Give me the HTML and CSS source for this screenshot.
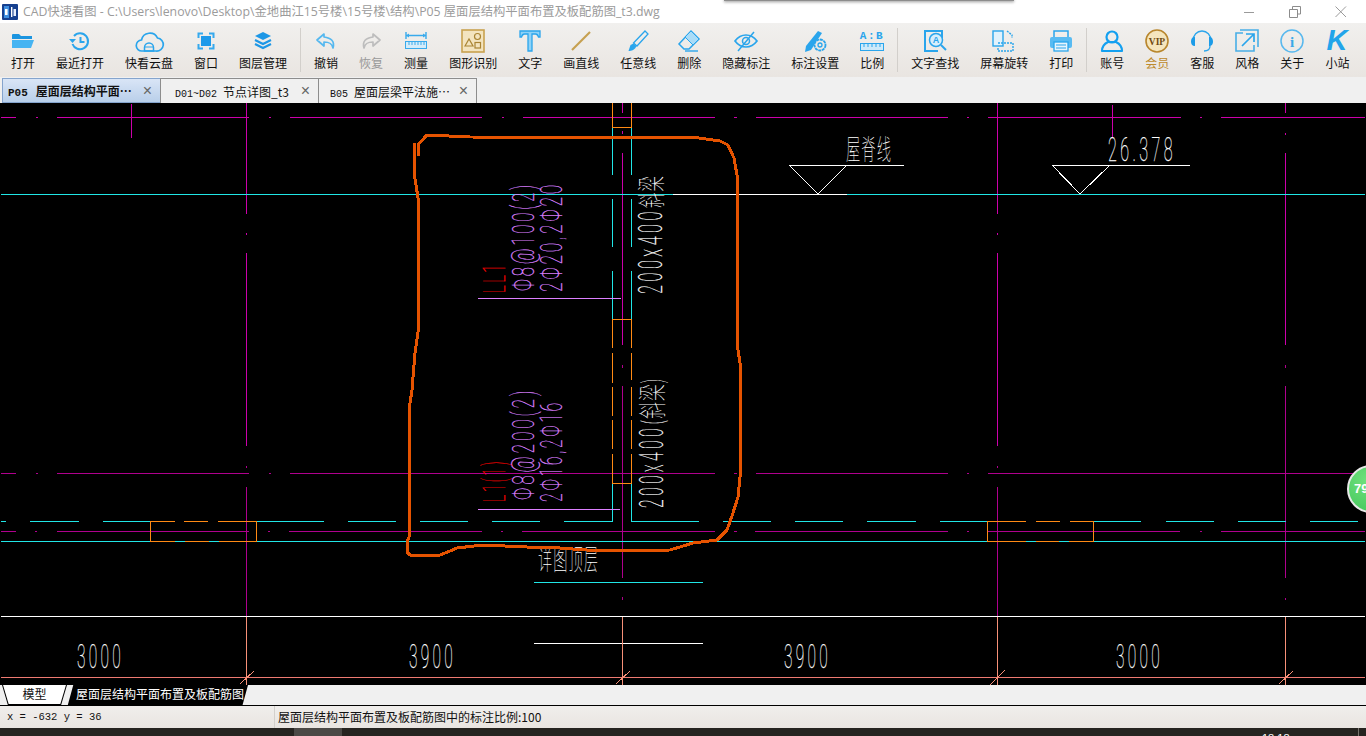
FILE: index.html
```html
<!DOCTYPE html>
<html lang="zh">
<head>
<meta charset="utf-8">
<title>CAD快速看图</title>
<link rel="stylesheet" href="styles.css">
</head>
<body>
<div class="app">
  <div class="ghost-shadow"></div>
  <header class="titlebar">
    <svg class="app-logo" viewBox="0 0 16 16"><rect width="16" height="16" rx="1" fill="#16408f"/><rect x="2" y="2" width="5" height="12" fill="#3f8fe0"/><rect x="9" y="3" width="1.4" height="10" fill="#fff"/><rect x="3" y="5" width="2.6" height="6" fill="#fff"/><rect x="11.5" y="5" width="2.5" height="7" fill="#e6eefc"/></svg>
    <span class="title-text">CAD快速看图 - C:\Users\lenovo\Desktop\金地曲江15号楼\15号楼\结构\P05 屋面层结构平面布置及板配筋图_t3.dwg</span>
    <div class="winctl">
      <svg viewBox="0 0 12 12"><path d="M1 6.5H11" stroke="#9a9a9a" fill="none"/></svg>
      <svg viewBox="0 0 12 12"><path d="M3.5 3V.5H11.500V8H9M.5 3.500H8.500V11.500H.5Z" stroke="#8c8c8c" fill="none"/></svg>
      <svg viewBox="0 0 12 12"><path d="M.5.5L11 11M11 .5L.5 11" stroke="#9a9a9a" fill="none"/></svg>
    </div>
  </header>

  <nav class="toolbar">
    <div class="tool"><svg class="ico" viewBox="0 0 24 24"><path d="M1 6a1 1 0 0 1 1-1h6l2 2h11v3H1z" fill="#1c95e0"/><path d="M1 11h22l-3 8H1z" fill="#46b4f2"/></svg><span>打开</span></div>
    <div class="tool"><svg class="ico" viewBox="0 0 24 24"><g fill="none" stroke="#2aa5ec" stroke-width="2"><path d="M6 7a8 8 0 1 1-1.500 8"/><path d="M12.500 8v5h4"/></g><path d="M1 10h7l-3.500 4z" fill="#2aa5ec"/></svg><span>最近打开</span></div>
    <div class="tool"><svg class="ico" viewBox="0 0 24 24"><path d="M5 22a5.500 5.500 0 0 1-.5-11 8.500 8.500 0 0 1 16-2 6.500 6.500 0 0 1-1.500 13z" fill="none" stroke="#2aa5ec" stroke-width="1.700"/><path d="M7.500 22v-3.500a4.500 4.500 0 0 1 9 0V22z" fill="none" stroke="#2aa5ec" stroke-width="1.500"/><path d="M8 18h8" stroke="#2aa5ec"/></svg><span>快看云盘</span></div>
    <div class="tool"><svg class="ico" viewBox="0 0 24 24"><rect x="7" y="7" width="10" height="10" fill="#1d9aea"/><path d="M4.500 9V4.500H9M15 4.500h4.500V9M19.500 15v4.500H15M9 19.500H4.500V15" fill="none" stroke="#35a9ee" stroke-width="2"/></svg><span>窗口</span></div>
    <div class="tool"><svg class="ico" viewBox="0 0 24 24"><path d="M12 3l8 4-8 4-8-4z" fill="#1d97e6"/><path d="M4 11l8 4 8-4M4 15l8 4 8-4" fill="none" stroke="#1d97e6" stroke-width="2.200"/></svg><span>图层管理</span></div>
    <div class="sep"></div>
    <div class="tool"><svg class="ico" viewBox="0 0 24 24"><path d="M10 5L3 11l7 6v-4c5 0 8 1 9 6 2-7-2-10-9-11z" fill="none" stroke="#55b8ef" stroke-width="1.700" stroke-linejoin="round"/></svg><span>撤销</span></div>
    <div class="tool off"><svg class="ico" viewBox="0 0 24 24"><path d="M14 5l7 6-7 6v-4c-5 0-8 1-9 6-2-7 2-10 9-11z" fill="none" stroke="#bdbdbd" stroke-width="1.700" stroke-linejoin="round"/></svg><span>恢复</span></div>
    <div class="tool"><svg class="ico" viewBox="0 0 24 24"><path d="M2 3v7M22 3v7M2 6.500h20" fill="none" stroke="#38aaec" stroke-width="1.400"/><path d="M2 6.500l3-2v4zM22 6.500l-3-2v4z" fill="#38aaec"/><rect x="1.500" y="12.500" width="21" height="7" fill="#d4ecfa" stroke="#38aaec"/><path d="M5 13v3M8 13v3M11 13v3M14 13v3M17 13v3M20 13v3" stroke="#38aaec"/></svg><span>测量</span></div>
    <div class="tool"><svg class="ico" viewBox="0 0 24 24"><rect x="1" y="1" width="22" height="22" fill="#f3e4bf" stroke="#c9a24f" stroke-width="1.600"/><path d="M4 17l4-7 4 7z" fill="none" stroke="#a98433" stroke-width="1.200"/><circle cx="16.500" cy="7.500" r="3" fill="none" stroke="#a98433" stroke-width="1.200"/><rect x="14" y="13.500" width="5.500" height="5.500" fill="none" stroke="#a98433" stroke-width="1.200"/></svg><span>图形识别</span></div>
    <div class="tool"><svg class="ico" viewBox="0 0 24 24"><path d="M2 2h20v6h-1.500c-.5-2-1-3-3-3H14v17h-4V5H6.500c-2 0-2.500 1-3 3H2z" fill="#8ed2f7" stroke="#2aa5ec" stroke-width="1.300"/></svg><span>文字</span></div>
    <div class="tool"><svg class="ico" viewBox="0 0 24 24"><path d="M3 21L21 3" stroke="#c6a050" stroke-width="2.200"/></svg><span>画直线</span></div>
    <div class="tool"><svg class="ico" viewBox="0 0 24 24"><path d="M19 2l3 3-11 12-3.500-3z" fill="none" stroke="#2aa5ec" stroke-width="1.300"/><path d="M7.500 14.500l-3 1.500-2 6c3 0 6.500-1 8-5z" fill="#2aa5ec"/></svg><span>任意线</span></div>
    <div class="tool"><svg class="ico" viewBox="0 0 24 24"><path d="M14 2l8 8-10 10H7l-5-5z" fill="none" stroke="#2aa5ec" stroke-width="1.500"/><path d="M14 2l8 8-6 6-8-8z" fill="#a9dcf8" stroke="#2aa5ec"/><path d="M8 22h13" stroke="#2aa5ec" stroke-width="1.400"/></svg><span>删除</span></div>
    <div class="tool"><svg class="ico" viewBox="0 0 24 24"><path d="M1 12c6-8 16-8 22 0-6 8-16 8-22 0z" fill="none" stroke="#2aa5ec" stroke-width="1.700"/><circle cx="12" cy="12" r="3.500" fill="none" stroke="#2aa5ec" stroke-width="1.500"/><path d="M4 22L20 3" stroke="#2aa5ec" stroke-width="1.500"/></svg><span>隐藏标注</span></div>
    <div class="tool"><svg class="ico" viewBox="0 0 24 24"><path d="M15 2l4 2-11 17-6 2 1-6z" fill="#2aa5ec"/><circle cx="17" cy="16" r="5.500" fill="#eeeae6" stroke="#2aa5ec" stroke-width="1.800" stroke-dasharray="3 .6"/><circle cx="17" cy="16" r="2" fill="none" stroke="#2aa5ec" stroke-width="1.300"/></svg><span>标注设置</span></div>
    <div class="tool"><svg class="ico" viewBox="0 0 24 24"><text class="ab" x="12" y="10" text-anchor="middle">A:B</text><rect x=".5" y="14.500" width="23" height="7" fill="#cdeafa" stroke="#2aa5ec"/><path d="M4 15v3M8 15v3M12 15v3M16 15v3M20 15v3" stroke="#2aa5ec"/></svg><span>比例</span></div>
    <div class="sep"></div>
    <div class="tool"><svg class="ico" viewBox="0 0 24 24"><path d="M19 9V2H2v20h13" fill="none" stroke="#2aa5ec" stroke-width="2"/><circle cx="13" cy="11" r="6.500" fill="#d7effc" stroke="#2aa5ec" stroke-width="1.500"/><text class="ab-sm" x="13" y="14" text-anchor="middle">A</text><path d="M18 16l5 5" stroke="#2aa5ec" stroke-width="2"/></svg><span>文字查找</span></div>
    <div class="tool"><svg class="ico" viewBox="0 0 24 24"><rect x="1" y="2" width="10" height="15" fill="#e1f2fc" stroke="#2aa5ec" stroke-width="1.400"/><path d="M6 14h15v8H6v-4" fill="none" stroke="#2aa5ec" stroke-dasharray="2 1" stroke-width="1.400"/><path d="M15 2l5 4v3" fill="none" stroke="#2aa5ec" stroke-width="1.400" stroke-dasharray="2 1"/></svg><span>屏幕旋转</span></div>
    <div class="tool"><svg class="ico" viewBox="0 0 24 24"><path d="M5 8V2h14v6" fill="none" stroke="#2aa5ec" stroke-width="1.500"/><rect x="1" y="8" width="22" height="11" rx="2" fill="#58bbf2"/><rect x="5" y="13" width="14" height="9" fill="#e7f5fd" stroke="#2aa5ec" stroke-width="1.300"/><path d="M7 16h10M7 19h10" stroke="#2aa5ec"/></svg><span>打印</span></div>
    <div class="sep"></div>
    <div class="tool"><svg class="ico" viewBox="0 0 24 24"><circle cx="12" cy="8" r="5.500" fill="none" stroke="#14a0f0" stroke-width="2.200"/><path d="M2 22c0-5 4-8 6-9h8c2 1 6 4 6 9z" fill="none" stroke="#14a0f0" stroke-width="2.200" stroke-linejoin="round"/></svg><span>账号</span></div>
    <div class="tool vip"><svg class="ico" viewBox="0 0 24 24"><circle cx="12" cy="12" r="11" fill="#f5e6bd" stroke="#b8862d" stroke-width="1.600"/><text class="vip-t" x="12" y="15.500" text-anchor="middle">VIP</text></svg><span>会员</span></div>
    <div class="tool"><svg class="ico" viewBox="0 0 24 24"><path d="M3 12C3 6 7 2 12 2s9 4 9 10M20 17c0 3-2 5-6 5" fill="none" stroke="#2aa5ec" stroke-width="1.300"/><path d="M5 8v9c-3 0-4-2-4-4.500S2 8 5 8zM19 8v9c3 0 4-2 4-4.500S22 8 19 8z" fill="#1c9ce8"/></svg><span>客服</span></div>
    <div class="tool"><svg class="ico" viewBox="0 0 24 24"><path d="M8 4H1v18h18v-6" fill="none" stroke="#48aee6" stroke-width="1.600"/><path d="M5 1h18v17" fill="none" stroke="#48aee6" stroke-width="1.600"/><path d="M7 17L19 5M11 5h8v8" fill="none" stroke="#2aa5ec" stroke-width="1.700"/></svg><span>风格</span></div>
    <div class="tool"><svg class="ico" viewBox="0 0 24 24"><circle cx="12" cy="12" r="11" fill="none" stroke="#58b8ee" stroke-width="1.500"/><text class="info-t" x="12" y="17.500" text-anchor="middle">i</text></svg><span>关于</span></div>
    <div class="tool"><svg class="ico" viewBox="0 0 24 24"><text class="k-t" x="12" y="21" text-anchor="middle">K</text></svg><span>小站</span></div>
  </nav>

  <div class="tabs">
    <div class="tab on"><span class="tab-label"><b class="code">P05</b>屋面层结构平面…</span><i class="x">×</i></div>
    <div class="tab"><span class="tab-label lead"><b class="code">D01~D02</b>节点详图_t3</span><i class="x">×</i></div>
    <div class="tab"><span class="tab-label mid"><b class="code">B05</b>屋面层梁平法施…</span><i class="x">×</i></div>
  </div>

  <main class="canvas">
    <svg class="draw" viewBox="0 103 1366 582" width="1366" height="582">
      <g class="crisp" fill="none">
        <path stroke="#cc00aa" d="M1 117.500H16M36 117.500H38M57 117.500H249M269 117.500H271M290 117.500H482M502 117.500H504M523 117.500H715M734 117.500H737M756 117.500H948M967 117.500H969M988 117.500H1181M1200 117.500H1202M1221 117.500H1365"/>
        <path stroke="#cc00aa" d="M246.500 103V214M246.500 233V235M246.500 253V446M131.500 104V138M1112.500 105V137M997.500 103V214M997.500 233V235M997.500 253V446M1285.500 103V113M1285.500 133V135M1285.500 153V345M622.500 103V113M622.500 131V134M622.500 153V345"/>
        <path stroke="#b0008e" d="M246.500 466V468M246.500 487V617M622.500 365V368M622.500 386V578M622.500 597V600M997.500 466V468M997.500 487V617M1285.500 365V368M1285.500 386V578M1285.500 598V600"/>
        <path stroke="#b0008e" d="M1 473.500H16M36 473.500H38M57 473.500H249M269 473.500H271M290 473.500H715M734 473.500H737M756 473.500H948M967 473.500H969M988 473.500H1365"/>
        <path stroke="#b0008e" d="M1 531.500H16M35 531.500H37M57 531.500H249M268 531.500H270M289 531.500H482M501 531.500H503M522 531.500H715M734 531.500H737M755 531.500H948M967 531.500H969M988 531.500H1180M1200 531.500H1202M1221 531.500H1365"/>
        <path stroke="#20e6e6" d="M673 194.500H1 M847 194.500H1365"/>
        <path stroke="#fff" d="M673 194.500H847"/>
        <path stroke="#20e6e6" d="M1 521.500H6M30 521.500H79M103 521.500H150M256 521.500H324M348 521.500H396M420 521.500H468M492 521.500H540M564 521.500H612.500V483M631.500 483V521.500H699M723 521.500H771M795 521.500H843M867 521.500H916M940 521.500H987M1093 521.500H1141M1166 521.500H1214M1238 521.500H1286M1310 521.500H1358"/>
        <path stroke="#20e6e6" d="M1 541.500H1365"/>
        <path stroke="#20e6e6" d="M612.500 127V175M612.500 199V247M612.500 271V319M631.500 127V175M631.500 199V247M631.500 271V319M534 582.500H703"/>
        <path stroke="#ff8a14" d="M150.500 521V541.500M256.500 521V541.500M150 521.500H175M184 521.500H208M218 521.500H256M150 541.500H175M185 541.500H209M219 541.500H256M987.500 521V541.500M1093.500 521V541.500M987 521.500H1026M1036 521.500H1060M1070 521.500H1093M987 541.500H1026M1036 541.500H1059M1069 541.500H1093"/>
        <path stroke="#ff8a14" d="M612.500 103V127.500H631.500V103M612.500 319.500H631.500M612.500 319V348M631.500 319V348M612.500 353V383M612.500 387V416M612.500 420V449M612.500 454V483.500H631.500V454M631.500 353V380M631.500 387V416M631.500 420V449"/>
        <path stroke="#fff" d="M1 616.500H1365M534 643.500H703M789 165.500H904M1052 165.500H1190"/>
        <path stroke="#ef7a72" d="M1 677.500H1365"/>
        <path stroke="#f79078" d="M246.500 617V685M622.500 617V685M997.500 617V685M1285.500 617V685M240 684L254 671M616 684L630 671M990 685L1005 670M1279 684L1293 671"/>
        <path stroke="#fff" d="M789 165L818 194L847 165M1052 165L1080 194L1110 165"/>
        <path stroke="#dd80ff" d="M478 298.500H621M478 509.500H620"/>
      </g>
      <g class="cad">
        <text x="77" y="668" textLength="47" lengthAdjust="spacingAndGlyphs">3000</text>
        <text x="409" y="668" textLength="47" lengthAdjust="spacingAndGlyphs">3900</text>
        <text x="784" y="668" textLength="47" lengthAdjust="spacingAndGlyphs">3900</text>
        <text x="1116" y="668" textLength="47" lengthAdjust="spacingAndGlyphs">3000</text>
        <text x="1108" y="161" textLength="68" lengthAdjust="spacingAndGlyphs">26.378</text>
        <text class="cjk" x="846" y="160" textLength="46" lengthAdjust="spacingAndGlyphs">屋脊线</text>
        <text class="cjk" x="538" y="570" textLength="61" lengthAdjust="spacingAndGlyphs">详图顶层</text>
        <text transform="translate(662 294) rotate(-90)" textLength="86" lengthAdjust="spacingAndGlyphs">200x400</text>
        <text class="cjk" transform="translate(662 208) rotate(-90)" textLength="33" lengthAdjust="spacingAndGlyphs">斜梁</text>
        <text transform="translate(663 508) rotate(-90)" textLength="83" lengthAdjust="spacingAndGlyphs">200x400</text>
        <text class="cjk" transform="translate(663 425) rotate(-90)" textLength="48" lengthAdjust="spacingAndGlyphs">(斜梁)</text>
      </g>
      <g class="cad purple">
        <text transform="translate(534 291) rotate(-90)" textLength="109" lengthAdjust="spacingAndGlyphs">Φ8@100(2)</text>
        <text transform="translate(562 292) rotate(-90)" textLength="110" lengthAdjust="spacingAndGlyphs">2Φ20,2Φ20</text>
        <text transform="translate(534 500) rotate(-90)" textLength="112" lengthAdjust="spacingAndGlyphs">Φ8@200(2)</text>
        <text transform="translate(562 502) rotate(-90)" textLength="102" lengthAdjust="spacingAndGlyphs">2Φ16,2Φ16</text>
      </g>
      <g class="cad red">
        <text transform="translate(505 293) rotate(-90)" textLength="31" lengthAdjust="spacingAndGlyphs">LL1</text>
        <text transform="translate(505 502) rotate(-90)" textLength="43" lengthAdjust="spacingAndGlyphs">L1(1)</text>
      </g>
      <path class="scribble" d="M414 143L414 173L416 185L418 198L418 332L415 353L412 390L409 410L409 537L407 542L407 552L410 555L417 556L440 555L450 551L457 548L483 545L527 547L560 548L600 551L670 550L693 543L717 540L727 530L733 513L738 497L740 477L740 363L738 350L737 338L737 175L734 158L728 145L720 141L699 138L470 137L427 135L425 137L418 145L418 156"/>
    </svg>
    <div class="badge"><span>79</span></div>
  </main>

  <div class="sheets">
    <div class="sheet model"><span>模型</span></div>
    <div class="sheet layout"><span>屋面层结构平面布置及板配筋图</span></div>
  </div>

  <footer class="status">
    <div class="coords">x = -632 y = 36</div>
    <div class="scale">屋面层结构平面布置及板配筋图中的标注比例:100</div>
  </footer>

  <div class="taskbar">
    <div class="task-active"></div>
    <div class="clock">18:18</div>
    <div class="task-edge"></div>
  </div>
</div>
</body>
</html>
```

FILE: styles.css
```css
* { box-sizing: border-box; }
html, body { margin: 0; padding: 0; background: #000; }
body { width: 1366px; height: 736px; overflow: hidden; font-family: "Noto Sans CJK SC", "Liberation Sans", sans-serif; }
.app { position: relative; width: 1366px; height: 736px; display: flex; flex-direction: column; overflow: hidden; }

.ghost-shadow { position: absolute; left: 724px; top: -1px; width: 290px; height: 2px; background: #8d8d8d; box-shadow: 0 1px 3px #8a8a8a; z-index: 2; }

.titlebar { flex: 0 0 23px; height: 23px; background: #fff; display: flex; align-items: center; padding-left: 2px; }
.app-logo { width: 16px; height: 16px; flex: none; }
.title-text { margin-left: 5px; font: 12.300px/23px "Open Sans", "Noto Sans CJK SC", sans-serif; color: #9b9b9b; white-space: nowrap; }
.winctl { margin-left: auto; display: flex; gap: 34px; padding-right: 19px; }
.winctl svg { width: 12px; height: 12px; display: block; }

.toolbar { flex: 0 0 54px; height: 54px; display: flex; gap: 21px; padding: 6px 0 0 11px; background: linear-gradient(#f1f0ee, #e9e5e1); }
.tool { display: flex; flex-direction: column; align-items: center; font-size: 12px; line-height: 16px; color: #111; white-space: nowrap; }
.tool span { margin-top: 2px; }
.tool.off { color: #999; }
.tool.vip { color: #bd8a2c; }
.ico { width: 24px; height: 24px; display: block; overflow: visible; }
.sep { width: 1px; height: 44px; margin: -1px -8px 0 -8px; background: #d2cfcb; }
.ab { font: 700 11px "Liberation Mono", monospace; fill: #2aa5ec; letter-spacing: 1.500px; }
.ab-sm { font: 700 9px "Liberation Sans", sans-serif; fill: #2aa5ec; }
.vip-t { font: 700 9.500px "Liberation Serif", serif; fill: #6e4a10; }
.info-t { font: 700 15px "Liberation Serif", serif; fill: #3aa9e8; }
.k-t { font: italic 700 29px "Liberation Sans", sans-serif; fill: #22a4ea; }

.tabs { flex: 0 0 26px; height: 26px; display: flex; padding: 1px 0 0 2px; background: #f0f0f0; }
.tab { width: 159px; height: 25px; margin-right: -1px; display: flex; align-items: center; border: 1px solid #8d8d8d; border-bottom-width: 0; background: #f0f0f0; font-size: 12px; color: #111; white-space: nowrap; }
.tab.on { background: linear-gradient(#d9e5f6, #b9cfea); border-color: #85a4cd; border-bottom-width: 1px; font-weight: 700; }
.tab-label { padding-left: 5px; flex: 1; }
.tab-label.lead { padding-left: 14px; }
.tab-label.mid { padding-left: 11px; }
.code { font: inherit; font-family: "Liberation Mono", monospace; font-size: 10px; margin-right: 6px; }
.tab.on .code { font-weight: 700; font-size: 11px; margin-right: 8px; }
.x { font: 400 16px/16px "Liberation Sans", sans-serif; color: #666; padding-right: 8px; }

.canvas { position: relative; flex: 0 0 582px; height: 582px; background: #000; }
.draw { display: block; }
.crisp path { shape-rendering: crispEdges; }
.cad text { font-family: "Roboto", "Noto Sans CJK SC", sans-serif; font-weight: 100; font-size: 33px; letter-spacing: 7px; fill: #fff; stroke: #fff; stroke-width: .25px; }
.cad .cjk { font-family: "Noto Sans CJK SC", sans-serif; font-size: 28px; letter-spacing: 2px; stroke-width: 0; }
.purple text { fill: #dd80ff; stroke: #dd80ff; font-size: 31px; letter-spacing: 5px; }
.red text { fill: #ff0000; stroke: #ff0000; font-size: 31px; letter-spacing: 5px; }
.scribble { fill: none; stroke: #e65300; stroke-width: 3; stroke-linejoin: round; shape-rendering: crispEdges; }
.badge { position: absolute; left: 1347px; top: 362px; width: 48px; height: 48px; border-radius: 50%; border: 2px solid #e8e8e8; background: radial-gradient(circle at 40% 30%, #6fe07c, #3fc458); color: #fff; font: 700 13px/44px "Liberation Sans", sans-serif; padding-left: 5px; }

.sheets { flex: 0 0 20px; height: 20px; display: flex; background: #f0f0f0; padding-left: 2px; }
.sheet { height: 20px; font-size: 12px; line-height: 18px; text-align: center; white-space: nowrap; }
.model { position: relative; width: 65px; background: #000; clip-path: polygon(0 0, 100% 0, 91% 100%, 9% 100%); color: #111; }
.model::before { content: ""; position: absolute; inset: 0 1px 1px 1px; background: #fff; clip-path: polygon(0 0, 100% 0, 91% 100%, 9% 100%); }
.model span { position: relative; }
.layout { width: 182px; margin-left: -1px; background: #000; color: #fff; clip-path: polygon(4% 0, 100% 0, 97% 100%, 1% 100%); padding-left: 6px; }

.status { flex: 0 0 23px; height: 23px; display: flex; align-items: center; border-top: 1px solid #000; background: linear-gradient(#f0eeec, #e9e5e1); font-size: 11px; color: #111; }
.coords { width: 274px; padding-left: 7px; font: 10.500px "Liberation Mono", monospace; }
.scale { border-left: 1px solid #d3d0cc; padding-left: 3px; font-size: 12px; line-height: 22px; }

.taskbar { position: relative; flex: 1; background: #262420; display: flex; overflow: hidden; }
.task-active { width: 48px; margin-left: 294px; background: #4b4946; }
.clock { margin-left: 920px; font: 11px/11px "Liberation Sans", sans-serif; color: #fff; padding-top: 5px; }
.task-edge { width: 1px; margin-left: 68px; background: #77736d; }
```
